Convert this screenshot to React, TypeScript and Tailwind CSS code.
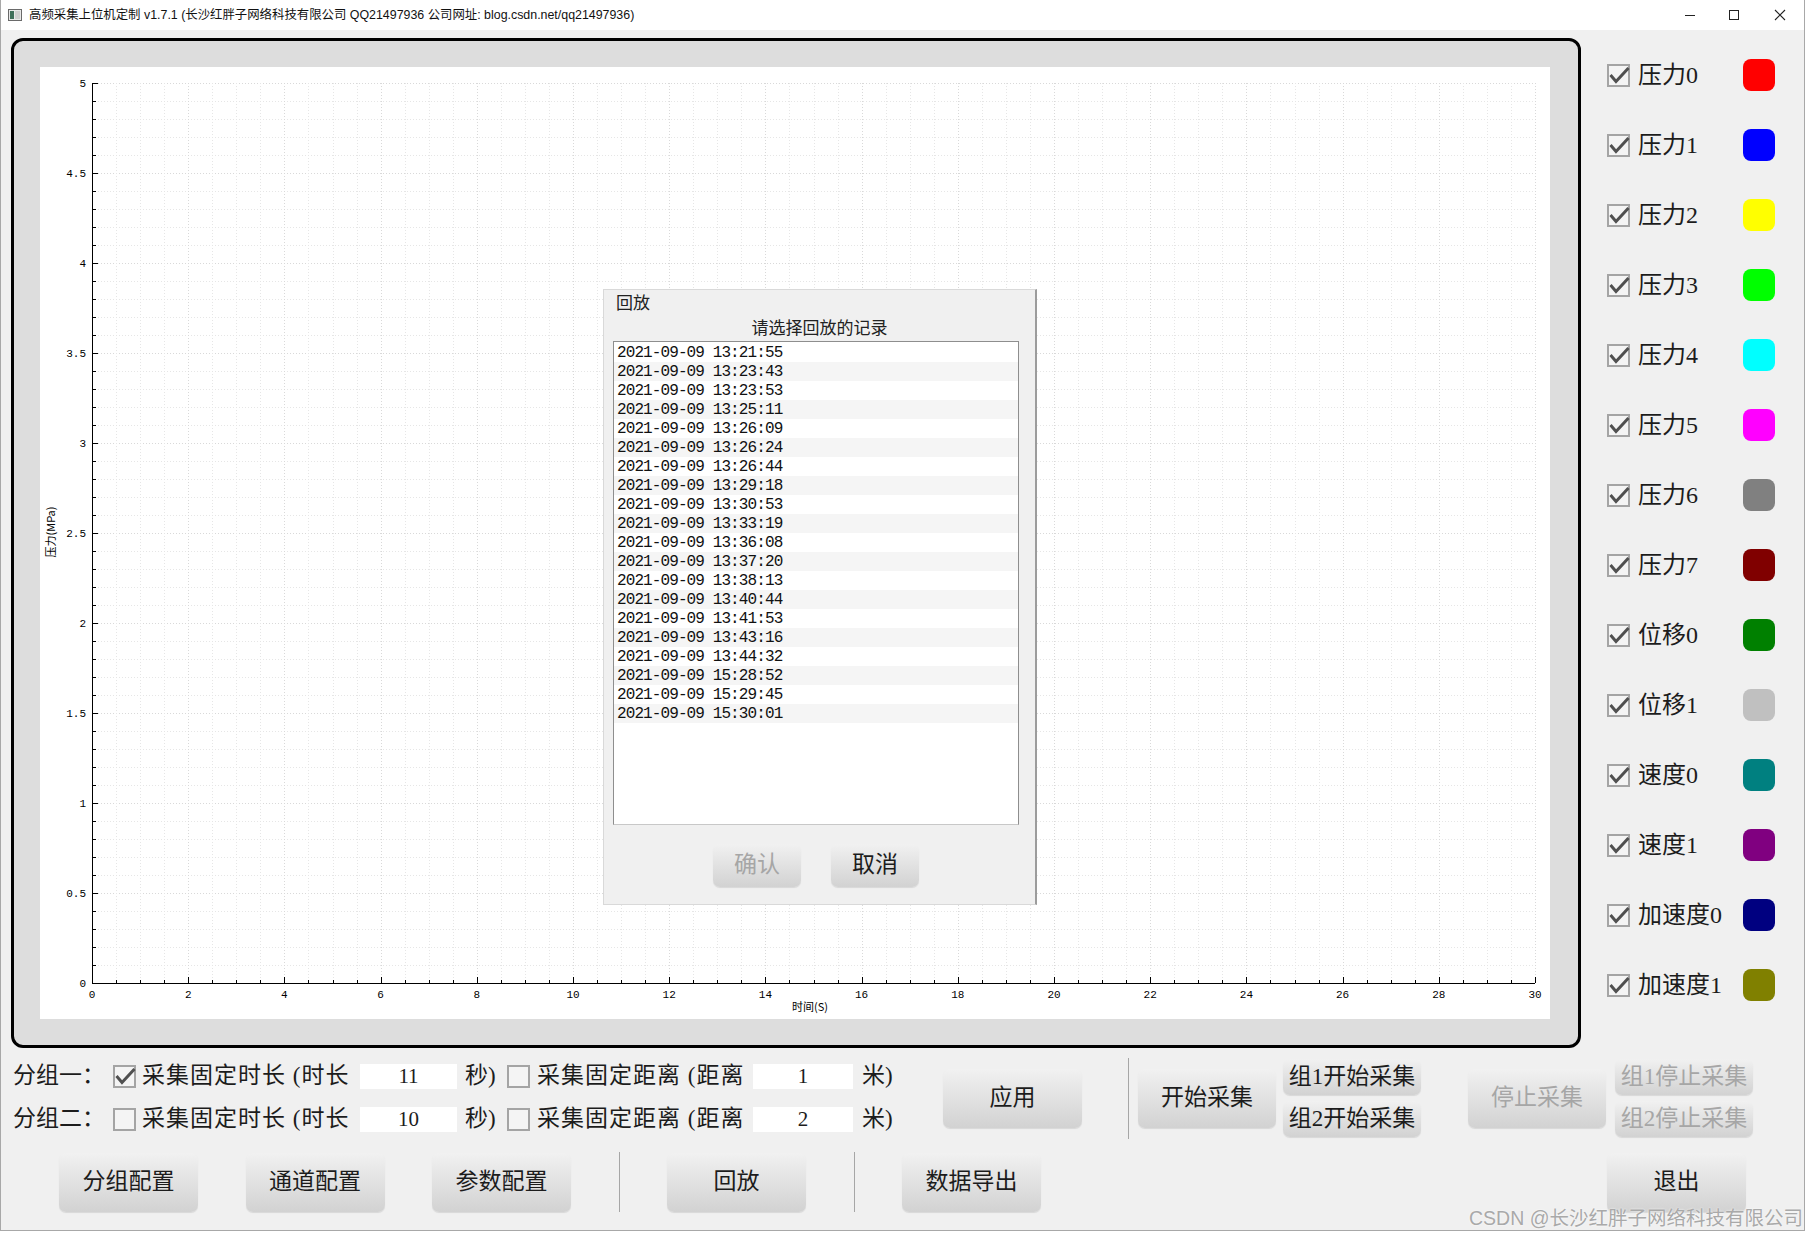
import clsx from "clsx";

const serif = "font-['Liberation_Serif','Noto_Sans_CJK_SC',serif]";

const channels: [string, string][] = [
  ["压力0", "#ff0000"],
  ["压力1", "#0000ff"],
  ["压力2", "#ffff00"],
  ["压力3", "#00ff00"],
  ["压力4", "#00ffff"],
  ["压力5", "#ff00ff"],
  ["压力6", "#808080"],
  ["压力7", "#800000"],
  ["位移0", "#008000"],
  ["位移1", "#c0c0c0"],
  ["速度0", "#008080"],
  ["速度1", "#800080"],
  ["加速度0", "#000080"],
  ["加速度1", "#808000"],
];

const records = [
  "13:21:55", "13:23:43", "13:23:53", "13:25:11", "13:26:09", "13:26:24", "13:26:44",
  "13:29:18", "13:30:53", "13:33:19", "13:36:08", "13:37:20", "13:38:13", "13:40:44",
  "13:41:53", "13:43:16", "13:44:32", "15:28:52", "15:29:45", "15:30:01",
];

function Check({ checked }: { checked: boolean }) {
  return (
    <svg width="23" height="23" viewBox="0 0 23 23" className="shrink-0">
      <rect x="1" y="1" width="21" height="21" fill="#f4f4f4" stroke="#a4a4a4" strokeWidth="2" />
      {checked && <path d="M3.5 11 L9 17.5 L21.5 4" fill="none" stroke="#505050" strokeWidth="3" />}
    </svg>
  );
}

function Btn({ children, className, disabled }: any) {
  return (
    <div
      className={clsx(
        "flex items-center justify-center rounded-[7px] bg-linear-to-b from-[#f1f1f1] to-[#d2d2d2] shadow-[0_1px_1px_rgba(0,0,0,0.1)] text-[23px] shrink-0",
        disabled ? "text-[#a6a6a6]" : "text-[#1c1c1c]",
        className
      )}
    >
      {children}
    </div>
  );
}

// plot coordinates inside the white area
const X0 = 52, X1 = 1495, Y0 = 916, Y1 = 16;
const sx = (v: number) => X0 + (v / 30) * (X1 - X0);
const sy = (v: number) => Y0 - (v / 5) * (Y0 - Y1);

function Chart() {
  const hs = Array.from({ length: 51 }, (_, i) => i);
  const vs = Array.from({ length: 61 }, (_, j) => j);
  return (
    <svg width="1510" height="952" className="block" shapeRendering="crispEdges">
      {hs.map((i) => (
        <line key={"h" + i} x1={X0} x2={X1} y1={Math.round(sy(i / 10)) + 0.5} y2={Math.round(sy(i / 10)) + 0.5}
          stroke={i % 5 === 0 ? "#d9d9d9" : "#e6e6e6"} strokeDasharray="1 2" />
      ))}
      {vs.map((j) => (
        <line key={"v" + j} y1={Y1} y2={Y0} x1={Math.round(sx(j / 2)) + 0.5} x2={Math.round(sx(j / 2)) + 0.5}
          stroke={j % 4 === 0 ? "#d9d9d9" : "#e6e6e6"} strokeDasharray="1 2" />
      ))}
      <line x1={X0 + 0.5} x2={X0 + 0.5} y1={Y1} y2={Y0} stroke="#000" />
      <line x1={X0} x2={X1} y1={Y0 + 0.5} y2={Y0 + 0.5} stroke="#000" />
      {hs.map((i) => (
        <line key={"yt" + i} x1={X0} x2={X0 + (i % 5 === 0 ? 6 : 4)} y1={Math.round(sy(i / 10)) + 0.5} y2={Math.round(sy(i / 10)) + 0.5} stroke="#000" />
      ))}
      {vs.map((j) => (
        <line key={"xt" + j} y1={Y0} y2={Y0 - (j % 4 === 0 ? 6 : 3)} x1={Math.round(sx(j / 2)) + 0.5} x2={Math.round(sx(j / 2)) + 0.5} stroke="#000" />
      ))}
      <g fontFamily="'Liberation Mono', monospace" fontSize="11" fill="#000">
        {Array.from({ length: 11 }, (_, k) => k / 2).map((v) => (
          <text key={"yl" + v} x={46} y={sy(v) + 4} textAnchor="end">{String(v)}</text>
        ))}
        {Array.from({ length: 16 }, (_, k) => k * 2).map((v) => (
          <text key={"xl" + v} x={sx(v)} y={Y0 + 15} textAnchor="middle">{String(v)}</text>
        ))}
      </g>
      <g fontFamily="'Noto Sans CJK SC', sans-serif" fontSize="11" fill="#000">
        <text x={770} y={944} textAnchor="middle">时间(S)</text>
        <text transform="translate(15 465) rotate(-90)" textAnchor="middle">压力(MPa)</text>
      </g>
    </svg>
  );
}

function ReplayDialog() {
  return (
    <div className="absolute left-[563px] top-[222px] w-[434px] h-[616px] bg-[#f0f0f0] border border-[#d9d9d9] border-r-2 border-r-[#9c9c9c] flex flex-col">
      <div className="h-[27px] pl-[12px] flex items-center text-[17px] text-[#222]">回放</div>
      <div className="h-[24px] flex items-center justify-center text-[17px] text-[#222]">请选择回放的记录</div>
      <div className="ml-[9px] w-[406px] h-[484px] bg-white border border-[#8e8e8e] border-b-[#c8c8c8] pt-px">
        {records.map((t, i) => (
          <div
            key={t}
            className={clsx(
              "h-[19px] pl-[3px] flex items-center font-['Liberation_Mono',monospace] text-[16px] tracking-[-0.9px] text-[#111]",
              i % 2 === 1 ? "bg-[#f5f5f5]" : "bg-white"
            )}
          >
            2021-09-09 {t}
          </div>
        ))}
      </div>
      <div className="mt-[19px] pl-[109px] flex gap-[30px]">
        <Btn disabled className="w-[88px] h-[43px] text-[18px]">确认</Btn>
        <Btn className="w-[88px] h-[43px] text-[18px]">取消</Btn>
      </div>
    </div>
  );
}

function FormRow({ label, c1, v1, v2 }: { label: string; c1: boolean; v1: string; v2: string }) {
  return (
    <div className="h-[41px] flex items-center text-[23px] text-[#1c1c1c]">
      <div className="w-[100px]">{label}</div>
      <Check checked={c1} />
      <div className="ml-[6px] w-[218px] whitespace-nowrap tracking-[1px]">采集固定时长 (时长</div>
      <div className="w-[97px] h-[25px] bg-white flex items-center justify-center text-[21px]">{v1}</div>
      <div className="ml-[8px] w-[42px]">秒)</div>
      <Check checked={false} />
      <div className="ml-[7px] w-[216px] whitespace-nowrap tracking-[1px]">采集固定距离 (距离</div>
      <div className="w-[100px] h-[25px] bg-white flex items-center justify-center text-[21px]">{v2}</div>
      <div className="ml-[9px]">米)</div>
    </div>
  );
}

export default function App() {
  return (
    <div className={clsx("w-[1814px] h-[1235px] bg-white relative overflow-hidden", serif)}>
      <div className="w-[1805px] h-[1231px] border-l border-r border-b border-[#a8a8a8] flex flex-col">
        {/* title bar */}
        <div className="h-[30px] shrink-0 bg-white flex items-center font-['Liberation_Sans','Noto_Sans_CJK_SC',sans-serif] text-[12.4px] text-[#111]">
          <svg width="14" height="14" viewBox="0 0 14 14" className="ml-[7px]">
            <rect x="0.5" y="1.5" width="13" height="11" fill="#e8e8e8" stroke="#6a6a6a" />
            <rect x="2" y="3" width="4" height="8" fill="#3f6f5a" />
            <rect x="7" y="3" width="5" height="8" fill="#cfcfcf" />
          </svg>
          <span className="ml-[7px] whitespace-nowrap">高频采集上位机定制 v1.7.1 (长沙红胖子网络科技有限公司 QQ21497936 公司网址: blog.csdn.net/qq21497936)</span>
          <div className="ml-auto flex items-center">
            <svg width="12" height="12" className="mr-[32px]"><line x1="1" x2="11" y1="6.5" y2="6.5" stroke="#222" /></svg>
            <svg width="12" height="12" className="mr-[34px]"><rect x="1.5" y="1.5" width="9" height="9" fill="none" stroke="#222" /></svg>
            <svg width="12" height="12" className="mr-[18px]"><path d="M1 1 L11 11 M11 1 L1 11" stroke="#222" strokeWidth="1.1" /></svg>
          </div>
        </div>

        {/* body */}
        <div className="flex-1 bg-[#f0f0f0] flex flex-col">
          <div className="flex pt-[8px] pl-[10px]">
            <div className="w-[1570px] h-[1010px] shrink-0 border-[3px] border-black rounded-[12px] bg-[#dddddd] pl-[26px] pt-[26px]">
              <div className="w-[1510px] h-[952px] bg-white relative">
                <Chart />
                <ReplayDialog />
              </div>
            </div>
            <div className="ml-[26px] pt-[2px] flex flex-col">
              {channels.map(([name, color]) => (
                <div key={name} className="h-[70px] flex items-center">
                  <Check checked />
                  <div className="ml-[8px] w-[105px] text-[24px] text-[#1c1c1c] whitespace-nowrap">{name}</div>
                  <div className="w-[32px] h-[32px] rounded-[8px]" style={{ backgroundColor: color }} />
                </div>
              ))}
            </div>
          </div>

          {/* group settings + acquisition buttons */}
          <div className="mt-[8px] flex items-center">
            <div className="w-[942px] pl-[12px] flex flex-col gap-[2px]">
              <FormRow label="分组一：" c1 v1="11" v2="1" />
              <FormRow label="分组二：" c1={false} v1="10" v2="2" />
            </div>
            <Btn className="w-[139px] h-[59px]">应用</Btn>
            <div className="ml-[46px] w-px h-[81px] bg-[#a6a6a6]" />
            <Btn className="ml-[9px] w-[138px] h-[59px]">开始采集</Btn>
            <div className="ml-[7px] flex flex-col gap-[6px]">
              <Btn className="w-[138px] h-[36px]">组1开始采集</Btn>
              <Btn className="w-[138px] h-[36px]">组2开始采集</Btn>
            </div>
            <Btn disabled className="ml-[47px] w-[138px] h-[59px]">停止采集</Btn>
            <div className="ml-[9px] flex flex-col gap-[6px]">
              <Btn disabled className="w-[138px] h-[36px]">组1停止采集</Btn>
              <Btn disabled className="w-[138px] h-[36px]">组2停止采集</Btn>
            </div>
          </div>

          {/* bottom buttons */}
          <div className="mt-[12px] pl-[58px] pr-[58px] flex items-center gap-[47.5px]">
            <Btn className="w-[139px] h-[59px]">分组配置</Btn>
            <Btn className="w-[139px] h-[59px]">通道配置</Btn>
            <Btn className="w-[139px] h-[59px]">参数配置</Btn>
            <div className="w-px h-[60px] bg-[#a6a6a6]" />
            <Btn className="w-[139px] h-[59px]">回放</Btn>
            <div className="w-px h-[60px] bg-[#a6a6a6]" />
            <Btn className="w-[139px] h-[59px]">数据导出</Btn>
            <Btn className="ml-auto w-[139px] h-[59px]">退出</Btn>
          </div>
        </div>
      </div>

      <div className="absolute right-[11px] bottom-[5px] text-[19.5px] leading-[24px] text-[#a9a9a9] font-['Liberation_Sans','Noto_Sans_CJK_SC',sans-serif] whitespace-nowrap [text-shadow:0_0_2px_#fff]">
        CSDN @长沙红胖子网络科技有限公司
      </div>
    </div>
  );
}
